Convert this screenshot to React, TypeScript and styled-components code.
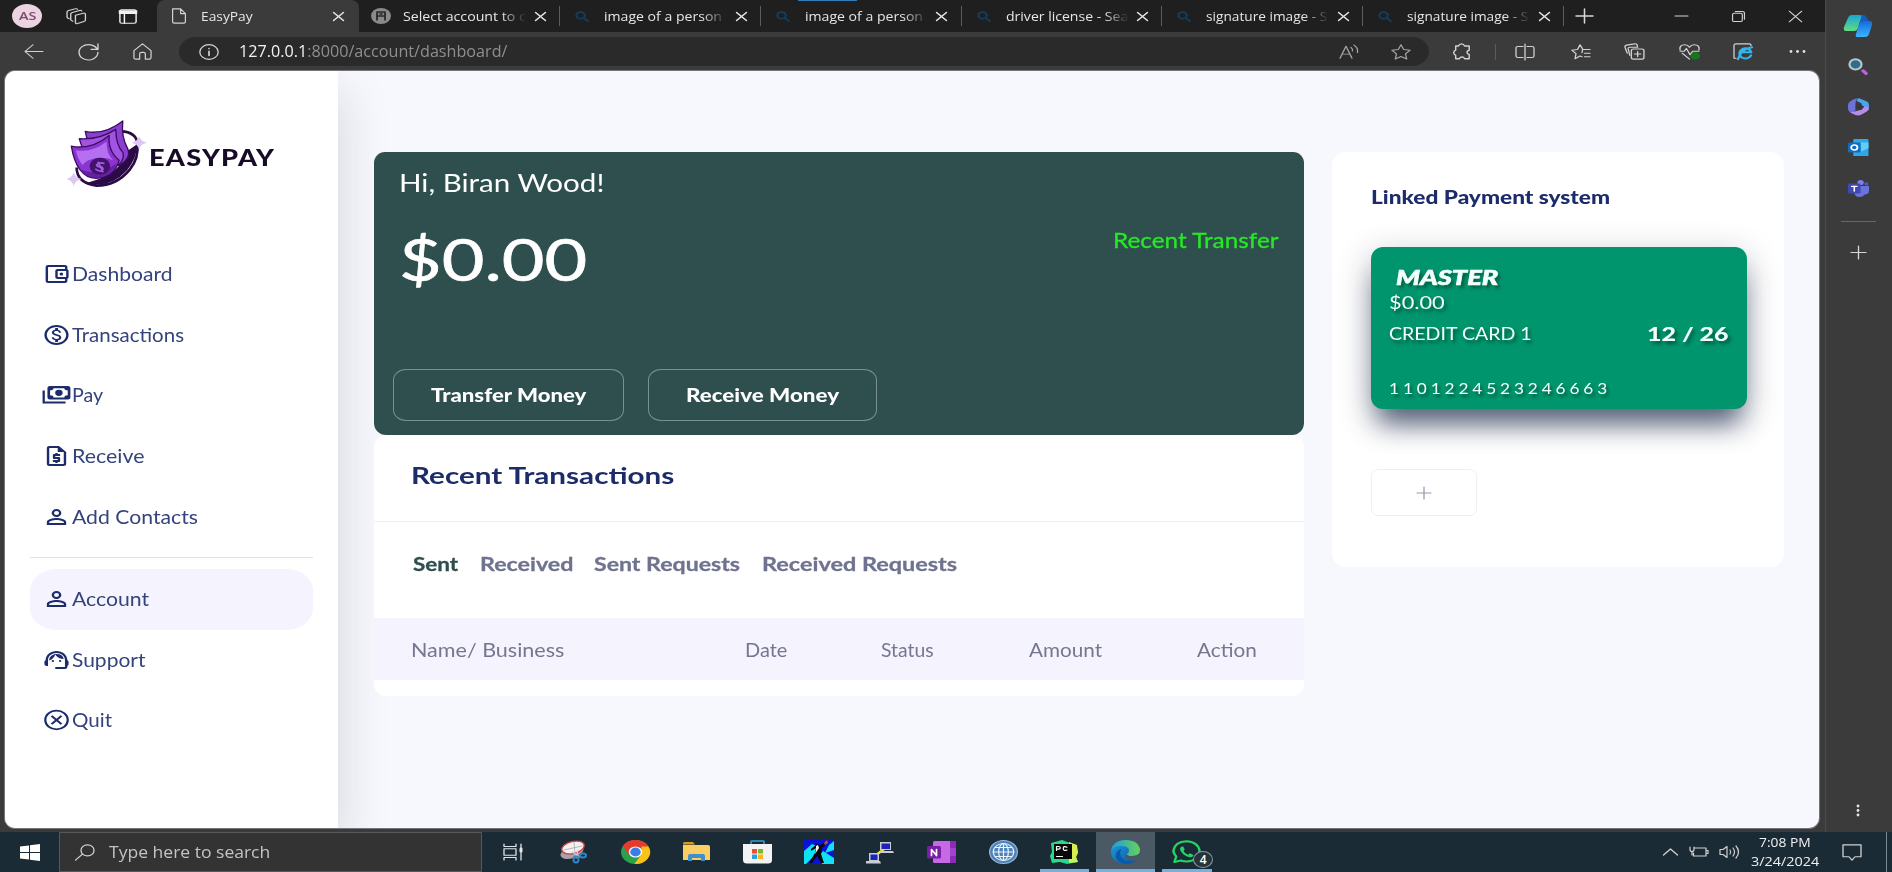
import React, { useLayoutEffect, useRef, useState } from "react";
import styled, { createGlobalStyle } from "styled-components";
import {
  MdOutlineAccountBalanceWallet,
  MdOutlineMonetizationOn,
  MdOutlineRequestQuote,
  MdPersonOutline,
  MdOutlineSupportAgent,
} from "react-icons/md";

const brand = `Lato, "Liberation Sans", sans-serif`;
const system = `"Open Sans", "Noto Sans", sans-serif`;
const navy = "#1c2c6b";

const GlobalStyle = createGlobalStyle`
  *, *::before, *::after { box-sizing: border-box; }
  body { margin: 0; background: #3b3b3b; overflow: hidden; }
`;

/* ---------- text that fills a given width ---------- */

const FitOuter = styled.span<{ $w: number }>`
  display: block;
  flex: none;
  width: ${(p) => p.$w}px;
  white-space: nowrap;
  text-align: left;
`;
const FitInner = styled.span`
  display: inline-block;
  transform-origin: 0 50%;
`;
function Fit({ w, children }: { w: number; children: React.ReactNode }) {
  const ref = useRef<HTMLSpanElement>(null);
  const [scale, setScale] = useState(1);
  useLayoutEffect(() => {
    if (ref.current && ref.current.offsetWidth) setScale(w / ref.current.offsetWidth);
  }, [w]);
  return (
    <FitOuter $w={w}>
      <FitInner ref={ref} style={{ transform: `scaleX(${scale})` }}>{children}</FitInner>
    </FitOuter>
  );
}

/* ---------- icon helpers ---------- */

const Glyph = styled.svg<{ $w: number; $h: number }>`
  display: block;
  flex: none;
  width: ${(p) => p.$w}px;
  height: ${(p) => p.$h}px;
  overflow: visible;
`;
type IconProps = { w?: number; h?: number; box?: string; color?: string; sw?: number; children: React.ReactNode };
const Icon = ({ w = 22, h = 18, box = "0 0 20 20", color = "#d2d2d2", sw = 1.3, children }: IconProps) => (
  <Glyph $w={w} $h={h} viewBox={box} preserveAspectRatio="none" fill="none" stroke={color} strokeWidth={sw} strokeLinecap="round" strokeLinejoin="round">
    {children}
  </Glyph>
);

/* ---------- window frame ---------- */

const Screen = styled.div`
  width: 1892px;
  height: 872px;
  display: grid;
  grid-template: 832px 40px / 1826px 66px;
  background: #3b3b3b;
  overflow: hidden;
  font-family: ${system};
`;
const Browser = styled.div`
  display: flex;
  flex-direction: column;
  border-right: 1px solid #4a4a4a;
`;
const TabStrip = styled.div`
  flex: none;
  height: 32px;
  display: flex;
  background: #1f1f1f;
  font-size: 13px;
  line-height: 32px;
  color: #e6e6e6;
`;
const Slot = styled.div<{ $w: number }>`
  flex: none;
  width: ${(p) => p.$w}px;
  display: flex;
  align-items: center;
  justify-content: center;
`;
const Avatar = styled.div`
  width: 30px;
  height: 24px;
  border-radius: 50%;
  background: #ecd3e2;
  color: #7d4a6c;
  font-size: 11px;
  font-weight: 600;
  line-height: 24px;
  display: flex;
  justify-content: center;
`;
const TabBox = styled.div<{ $w: number; $active?: boolean; $loading?: boolean }>`
  position: relative;
  flex: none;
  width: ${(p) => p.$w}px;
  display: flex;
  align-items: center;
  background: ${(p) => (p.$active ? "#3b3b3b" : "transparent")};
  border-radius: 8px 8px 0 0;
  &::before {
    content: "";
    position: absolute;
    top: 0;
    left: 37px;
    width: 59px;
    height: 1px;
    background: ${(p) => (p.$loading ? "#2f7cb8" : "transparent")};
  }
`;
const TabIcon = styled.div`
  width: 44px;
  display: flex;
  justify-content: center;
  flex: none;
`;
const TabTitle = styled.div<{ $fade?: boolean }>`
  width: 124px;
  overflow: hidden;
  ${(p) => p.$fade && "-webkit-mask-image: linear-gradient(90deg, #000 98px, transparent 123px);"}
`;
const TabClose = styled.div`
  width: 26px;
  display: flex;
  justify-content: center;
  flex: none;
`;
const Divider = styled.div<{ $h: number }>`
  flex: none;
  align-self: center;
  width: 1px;
  height: ${(p) => p.$h}px;
  background: #5c5c5c;
`;
const Toolbar = styled.div`
  flex: none;
  height: 39px;
  display: flex;
  align-items: center;
  padding-left: 7px;
`;
const AddressBar = styled.div`
  width: 1250px;
  height: 29px;
  margin-left: 9px;
  border-radius: 18px / 15px;
  background: #2a2a2a;
  display: flex;
  align-items: center;
  font-size: 15.5px;
  line-height: 29px;
  color: #8f8f8f;
`;
const Host = styled.span`
  color: #f2f2f2;
`;
const Url = styled.div`
  flex: 1;
`;

/* ---------- page ---------- */

const Page = styled.div`
  width: 1814px;
  height: 757px;
  margin-left: 5px;
  border-radius: 10px;
  display: flex;
  overflow: hidden;
  background: #f7f8fd;
  box-shadow: 0 0 0 1px #77757c;
  font-family: ${brand};
`;
const Sidebar = styled.aside`
  flex: none;
  width: 333px;
  background: #fff;
  box-shadow: 6px 20px 45px rgba(20, 25, 50, 0.13);
  padding: 48px 25px 0;
`;
const Brand = styled.div`
  display: flex;
  align-items: center;
  height: 69px;
  padding-left: 36px;
  font-size: 22px;
  font-weight: 900;
  line-height: 40px;
  letter-spacing: 1px;
  color: #170b28;
`;
const BrandName = styled.div`
  padding-top: 8px;
`;
const Nav = styled.nav<{ $top: number }>`
  padding-top: ${(p) => p.$top}px;
`;
const NavItem = styled.a<{ $active?: boolean }>`
  display: flex;
  align-items: center;
  height: 60.6px;
  padding-left: 12px;
  border-radius: 26px / 22px;
  background: ${(p) => (p.$active ? "#f5f3fe" : "transparent")};
  color: #34437d;
  font-size: 19px;
  line-height: 28px;
`;
const NavIcon = styled.span`
  width: 29.5px;
  height: 24px;
  flex: none;
  color: ${navy};
  svg {
    display: block;
    width: 29px;
    height: 24px;
  }
`;
const Rule = styled.hr`
  margin: 10px 0 0;
  border: 0;
  height: 1px;
  background: #e1e1e6;
`;
const Main = styled.main`
  position: relative;
  display: flex;
  align-items: flex-start;
  gap: 28px;
  padding: 81px 0 0 36px;
`;
const Column = styled.div`
  width: 930px;
`;
const Balance = styled.section`
  height: 283px;
  border-radius: 11px 11px 12px 12px;
  background: #2f4f4f;
  color: #fff;
  padding: 14px 25px 14px 19px;
  display: flex;
  flex-direction: column;
`;
const Greeting = styled.div`
  padding-left: 5.5px;
  font-size: 24.5px;
  line-height: 34px;
`;
const BalanceRow = styled.div`
  display: flex;
  justify-content: space-between;
  align-items: flex-start;
  padding: 24px 0 0 6px;
`;
const Total = styled.div`
  font-size: 58px;
  line-height: 70px;
  -webkit-text-stroke: 0.6px #fff;
`;
const TransferLink = styled.a`
  font-size: 22px;
  line-height: 32px;
  color: #27e827;
  -webkit-text-stroke: 0.3px #27e827;
`;
const Actions = styled.div`
  display: flex;
  gap: 24px;
  margin-top: auto;
`;
const ActionButton = styled.button<{ $w: number }>`
  width: ${(p) => p.$w}px;
  height: 52px;
  padding: 0;
  border: 1px solid #78908f;
  border-radius: 13px / 11px;
  background: transparent;
  display: flex;
  align-items: center;
  justify-content: center;
  color: #fff;
  font: 900 19px/30px ${brand};
`;
const Transactions = styled.section`
  height: 261px;
  border-radius: 12px;
  overflow: hidden;
  background: #fff;
`;
const CardTitle = styled.h2`
  margin: 0;
  height: 87px;
  padding: 24px 37px 0;
  border-bottom: 1px solid #f0f0f4;
  font-size: 23px;
  font-weight: 700;
  line-height: 32px;
  color: ${navy};
`;
const Filters = styled.div`
  height: 96px;
  display: flex;
  gap: 21.5px;
  padding: 26.5px 39px 0;
  font-size: 19px;
  font-weight: 700;
  line-height: 30px;
`;
const Filter = styled.span<{ $active?: boolean }>`
  color: ${(p) => (p.$active ? "#2f4f4f" : "#6f7390")};
  -webkit-text-stroke: 0.3px currentColor;
`;
const TableHead = styled.div`
  display: grid;
  grid-template-columns: 334px 135.5px 148px 168px 1fr;
  align-items: center;
  height: 62px;
  padding: 1px 0 0 37px;
  background: #f5f3fe;
  font-size: 19px;
  line-height: 30px;
  color: #74778f;
`;
const Linked = styled.section`
  width: 452px;
  height: 415px;
  padding: 31px 37px 0 38.5px;
  border-radius: 14px;
  background: #fff;
`;
const LinkedTitle = styled.h3`
  margin: 0 0 36px;
  font-size: 18px;
  font-weight: 900;
  line-height: 28px;
  color: ${navy};
`;
const CreditCard = styled.div`
  height: 162px;
  border-radius: 12px;
  padding: 18px 19px 0 18px;
  background: #00956d;
  color: #f3fffb;
  text-shadow: 2px 3px 3px rgba(0, 40, 30, 0.55);
  box-shadow: 0 22px 26px -8px rgba(18, 34, 66, 0.62), 0 10px 34px rgba(20, 30, 60, 0.3);
`;
const Network = styled.div`
  padding-left: 7px;
  font-size: 20px;
  font-weight: 900;
  font-style: italic;
  line-height: 24px;
  -webkit-text-stroke: 0.6px currentColor;
`;
const CardLine = styled.div<{ $gap: number }>`
  display: flex;
  justify-content: space-between;
  margin-top: ${(p) => p.$gap}px;
  font-size: 17.5px;
  line-height: 24px;
`;
const Expiry = styled.b`
  font-size: 18.5px;
  font-weight: 900;
`;
const CardNumber = styled.div`
  margin-top: 30px;
  font-size: 16px;
  line-height: 24px;
  letter-spacing: 3.6px;
`;
const AddCard = styled.button`
  width: 106px;
  height: 47px;
  margin-top: 60px;
  padding: 0;
  border: 1px solid #efeff3;
  border-radius: 7px;
  background: #fff;
  display: flex;
  align-items: center;
  justify-content: center;
`;

/* ---------- right rail and taskbar ---------- */

const Rail = styled.div`
  display: flex;
  flex-direction: column;
  align-items: center;
  padding: 6px 2px 0 0;
  background: #3b3b3b;
`;
const RailSlot = styled.div`
  height: 40.5px;
  display: flex;
  align-items: center;
`;
const RailLine = styled.div`
  width: 35px;
  height: 1px;
  margin: 12px 0 11px;
  background: #676767;
`;
const RailMore = styled.div`
  margin: auto 0 15px;
`;
const Taskbar = styled.div`
  grid-column: 1 / 3;
  display: flex;
  background: #1b2b36;
  color: #eef1f3;
`;
const SearchBox = styled.div`
  flex: none;
  width: 423px;
  border: 1px solid #56595b;
  background: #333;
  display: flex;
  align-items: center;
  font-size: 16px;
  line-height: 38px;
  color: #c4c4c4;
`;
const TaskSlot = styled.div<{ $open?: boolean; $focus?: boolean }>`
  flex: none;
  position: relative;
  width: 61.3px;
  display: flex;
  align-items: center;
  justify-content: center;
  &::before {
    content: "";
    position: absolute;
    inset: 0 1px;
    background: ${(p) => (p.$focus ? "#4a5963" : "transparent")};
  }
  &::after {
    content: "";
    position: absolute;
    bottom: 0;
    left: ${(p) => (p.$focus ? 1 : 6)}px;
    right: ${(p) => (p.$focus ? 1 : 6)}px;
    height: 3px;
    background: ${(p) => (p.$open ? "#76b0dc" : "transparent")};
  }
  svg {
    position: relative;
  }
`;
const Count = styled.span`
  position: absolute;
  left: 37px;
  top: 19px;
  width: 20px;
  height: 17px;
  border: 1px solid #8d979d;
  border-radius: 50%;
  background: #27333b;
  color: #fff;
  font-size: 12px;
  font-weight: 600;
  line-height: 15px;
  text-align: center;
`;
const Tray = styled.div`
  margin-left: auto;
  display: flex;
`;
const Clock = styled.div`
  width: 78px;
  padding-top: 1px;
  display: flex;
  flex-direction: column;
  align-items: center;
  font-size: 12.5px;
  line-height: 19px;
`;
const ShowDesktop = styled.div`
  width: 6px;
  border-left: 1px solid #7b868d;
`;

const Cross = () => (
  <Icon w={11} h={9} box="0 0 10 10" sw={1.4} color="#e2e2e2"><path d="M.5.5l9 9M9.5.5l-9 9" /></Icon>
);
const Plus = ({ w, h, color }: { w: number; h: number; color: string }) => (
  <Icon w={w} h={h} box="0 0 10 10" sw={0.9} color={color}><path d="M5 0v10M0 5h10" /></Icon>
);
const Lens = () => (
  <Icon w={14} h={11} box="0 0 12 12" sw={1.8} color="#153e5c"><circle cx="4.8" cy="4.8" r="3.6" /><path d="M7.6 7.6L11 11" /></Icon>
);

const tabs = [
  { title: "image of a person", w: 118 },
  { title: "image of a person", w: 118, loading: true },
  { title: "driver license - Sea", w: 122 },
  { title: "signature image - S", w: 121 },
  { title: "signature image - S", w: 121 },
];

function Tabs() {
  return (
    <TabStrip>
      <Slot $w={54}><Avatar><Fit w={17}>AS</Fit></Avatar></Slot>
      <Slot $w={45}>
        <Icon w={21} h={16}><path d="M9 8.500l7.500-2.500q2-.5 2 1.500v7q0 1.500-1.500 2L11 19q-2 .5-2-1.500zM6.500 16L5 15q-.5-.5-.5-1.500V7q0-1.500 1.500-2l7-2.500q1.500-.5 2 .8M3 13l-1.500-1Q1 11.500 1 10.500V4.500Q1 3 2.500 2.500L9 .5q1.500-.5 2 .5" transform="translate(0 .5)" /></Icon>
      </Slot>
      <Slot $w={58}>
        <Icon w={18} h={15} color="#f2f2f2" sw={1.6}><rect x="1" y="1" width="18" height="18" rx="2" /><path d="M1 3h18M1 5.2h18" strokeWidth="3" /><path d="M6 6v13" /></Icon>
      </Slot>
      <TabBox $w={202} $active>
        <TabIcon><Icon w={16} h={16} sw={1.5}><path d="M2 1h10l6 6v10q0 2-2 2H4q-2 0-2-2zM12 1v6h6" /></Icon></TabIcon>
        <TabTitle><Fit w={52}>EasyPay</Fit></TabTitle>
        <TabClose><Cross /></TabClose>
      </TabBox>
      <TabBox $w={200}>
        <TabIcon>
          <Icon w={20} h={16} color="#2a2a2a" sw={1.8}><circle cx="10" cy="10" r="10" fill="#8a8a8a" stroke="none" /><path d="M6 15V5h8v10M6 10h8M9 7.5h2" /></Icon>
        </TabIcon>
        <TabTitle $fade><Fit w={123}>Select account to c</Fit></TabTitle>
        <TabClose><Cross /></TabClose>
      </TabBox>
      {tabs.map((t, i) => (
        <React.Fragment key={i}>
          <Divider $h={20} />
          <TabBox $w={199.8} $loading={t.loading}>
            <TabIcon><Lens /></TabIcon>
            <TabTitle $fade><Fit w={t.w}>{t.title}</Fit></TabTitle>
            <TabClose><Cross /></TabClose>
          </TabBox>
        </React.Fragment>
      ))}
      <Divider $h={20} />
      <Slot $w={42}><Plus w={17} h={14} color="#d8d8d8" /></Slot>
      <Slot $w={49} />
      <Slot $w={54}><Icon w={13} h={2} box="0 0 12 2" sw={1}><path d="M0 1h12" /></Icon></Slot>
      <Slot $w={60}><Icon w={13} h={11} box="0 0 12 12" sw={1.1}><rect x=".5" y="2.5" width="9" height="9" rx="1.5" /><path d="M3 .6h6.500q2 0 2 2V9" /></Icon></Slot>
      <Slot $w={54}><Icon w={13} h={11} box="0 0 10 10" sw={0.9}><path d="M.2.2l9.600 9.600M9.800.2L.2 9.800" /></Icon></Slot>
    </TabStrip>
  );
}

function AddressRow() {
  return (
    <Toolbar>
      <Slot $w={54}><Icon w={20} h={15}><path d="M19 10H1M9 1l-8 9 8 9" /></Icon></Slot>
      <Slot $w={54}><Icon w={21} h={17}><path d="M18.500 8A9 9 0 1 0 19 11M19 1v6.500h-6.500" /></Icon></Slot>
      <Slot $w={55}><Icon w={19} h={17}><path d="M1 9l9-8 9 8v8q0 2-2 2h-4v-6q0-2-2-2H9q-2 0-2 2v6H3q-2 0-2-2z" /></Icon></Slot>
      <AddressBar>
        <Slot $w={60}><Icon w={20} h={16}><circle cx="10" cy="10" r="9.200" /><path d="M10 9v5.500M10 5.500v.3" strokeWidth="1.700" /></Icon></Slot>
        <Url><Fit w={269}><Host>127.0.0.1</Host>:8000/account/dashboard/</Fit></Url>
        <Slot $w={49}><Icon w={20} h={15} color="#a5a5a5"><path d="M1 19L7 3l6 16M3.200 13.500h7.600M12 4.500q2 2 1.500 5M15 1.500q4.500 4 3.500 10" /></Icon></Slot>
        <Slot $w={56}><Icon w={20} h={16} color="#a5a5a5"><path d="M10 1l2.800 6 6.400.8-4.700 4.400 1.200 6.600L10 15.600l-5.700 3.200 1.200-6.600L.8 7.800 7.200 7z" /></Icon></Slot>
      </AddressBar>
      <Slot $w={66}><Icon w={18} h={17} sw={1.6}><path d="M6 3.500Q7 1 9.500 1T13 3.500h5v5q-2.500.5-2.500 2.500t2.500 2.500v5h-5Q12 16.500 10 16.500T7 18.500H3v-4Q.8 13.500.8 11.500T3 8.500v-5z" /></Icon></Slot>
      <Divider $h={16} />
      <Slot $w={58}><Icon w={20} h={16}><path d="M8 3H3Q1 3 1 5v10q0 2 2 2h5M12 3h5q2 0 2 2v10q0 2-2 2h-5M10 0v20" /></Icon></Slot>
      <Slot $w={53}><Icon w={20} h={16}><path d="M12 7h7M13.500 11.500H19M13.500 16H19M11 16l-2-1-5 3.500 1-6.500L.8 7.800l5.700-.9L9 1l2.500 5M11.500 7l-.5 4" /></Icon></Slot>
      <Slot $w={55}><Icon w={21} h={17}><path d="M3 12L1 5q-.5-2 1.500-2.500L10 1q2-.5 2.500 1.500l.3 1.500M5.500 14.500L4 7q-.3-2 2-2h7" /><rect x="7" y="7" width="12" height="12" rx="2" /><path d="M13 10v6M10 13h6" /></Icon></Slot>
      <Slot $w={54}>
        <Icon w={21} h={16}><path d="M1 7.500Q0 1 5.500 1 8.500 1 10 4 11.500 1 14.500 1 20 1 19 7.500M3 11.500l7 7.500M1 9h4l2-3.500 3.500 8L13 9h6" /><circle cx="15.500" cy="15" r="4.600" fill="#137a1c" stroke="none" /></Icon>
      </Slot>
      <Slot $w={54}>
        <Icon w={20} h={17}><path d="M3 18H1V3q0-2 2-2h13q2 0 2 2" /><path d="M18 14.500A6 6 0 1 1 18.300 11H8M5 19q3-12 14-14" stroke="#35b5ee" strokeWidth="2.400" /></Icon>
      </Slot>
      <Slot $w={54}><Icon w={17} h={3} box="0 0 17 3" color="none"><g fill="#e0e0e0"><circle cx="2" cy="1.500" r="1.400" /><circle cx="8.500" cy="1.500" r="1.400" /><circle cx="15" cy="1.500" r="1.400" /></g></Icon></Slot>
    </Toolbar>
  );
}

const Logo = () => (
  <Glyph $w={83} $h={69} viewBox="200 145 250 206" preserveAspectRatio="none">
    <path d="M232 290Q232 336 292 344Q352 344 392 296Q420 262 415 216Q410 184 366 182" fill="none" stroke="#2a0b45" strokeWidth="8" />
    <path d="M262 336Q330 356 384 298Q414 262 415 220L386 240Q366 310 262 336z" fill="#2a0b45" />
    <path d="M420 196q4 16 24 20q-20 4-24 20q-4-16-22-20q18-4 22-20zM223 304q4 16 24 20q-20 4-24 22q-4-18-22-22q18-4 22-20z" fill="#dcc8f3" />
    <g stroke="#3a0d63" strokeWidth="4" strokeLinejoin="round">
      <path d="M258 182Q316 194 371 151Q366 200 386 234Q398 262 360 284L276 260z" fill="#8b3fd0" />
      <path d="M240 204Q300 208 350 176Q350 222 372 246Q378 272 346 290L262 270z" fill="#a353e2" />
      <path d="M216 226Q276 238 330 194Q326 242 360 268Q346 320 290 322Q232 320 216 226z" fill="#8a35cf" />
    </g>
    <path d="M230 238Q280 246 322 212Q322 250 342 268Q320 258 290 262Q262 266 250 282Q234 264 230 238z" fill="#b66ff0" />
    <path d="M238 292Q292 322 352 278Q336 318 290 320Q258 320 238 292z" fill="#6420a0" />
    <ellipse cx="302" cy="286" rx="31" ry="25" fill="#43126e" />
    <path d="M316 278Q298 272 292 282Q294 288 306 288Q316 292 308 300Q298 302 288 294M296 272l16 32" fill="none" stroke="#a35ee0" strokeWidth="5" />
  </Glyph>
);

const PayIcon = () => (
  <svg viewBox="0 0 24 24" preserveAspectRatio="none" fill="none" stroke="currentColor">
    <path d="M1.400 7.500V19.500H19.500" strokeWidth="1.900" />
    <path fillRule="evenodd" fill="currentColor" stroke="none" d="M6.500 3h15q2 0 2 2v9.500q0 2-2 2h-15q-2 0-2-2V5q0-2 2-2zM9.500 5.200q0 2.100-2.800 2.100v5q2.800 0 2.800 2.100h9q0-2.100 2.800-2.100v-5q-2.800 0-2.800-2.100z" />
    <circle cx="14" cy="9.800" r="3.100" fill="currentColor" stroke="none" />
  </svg>
);
const QuitIcon = () => (
  <svg viewBox="0 0 24 24" preserveAspectRatio="none" fill="none" stroke="currentColor">
    <circle cx="12" cy="12" r="9.300" strokeWidth="1.800" />
    <path d="M7.900 7.900l8.200 8.200M16.100 7.900l-8.200 8.200" strokeWidth="1.900" />
  </svg>
);

const stretch = { preserveAspectRatio: "none" };
const primary = [
  { label: "Dashboard", w: 101, icon: <MdOutlineAccountBalanceWallet {...stretch} /> },
  { label: "Transactions", w: 112, icon: <MdOutlineMonetizationOn {...stretch} /> },
  { label: "Pay", w: 31, icon: <PayIcon /> },
  { label: "Receive", w: 72, icon: <MdOutlineRequestQuote {...stretch} /> },
  { label: "Add Contacts", w: 126, icon: <MdPersonOutline {...stretch} /> },
];
const secondary = [
  { label: "Account", w: 77, icon: <MdPersonOutline {...stretch} />, active: true },
  { label: "Support", w: 74, icon: <MdOutlineSupportAgent {...stretch} /> },
  { label: "Quit", w: 40, icon: <QuitIcon /> },
];

function SideNav() {
  return (
    <Sidebar>
      <Brand><Logo /><BrandName><Fit w={126}>EASYPAY</Fit></BrandName></Brand>
      <Nav $top={56}>
        {primary.map((n) => <NavItem key={n.label}><NavIcon>{n.icon}</NavIcon><Fit w={n.w}>{n.label}</Fit></NavItem>)}
      </Nav>
      <Rule />
      <Nav $top={11}>
        {secondary.map((n) => <NavItem key={n.label} $active={n.active}><NavIcon>{n.icon}</NavIcon><Fit w={n.w}>{n.label}</Fit></NavItem>)}
      </Nav>
    </Sidebar>
  );
}

function Dashboard() {
  return (
    <Main>
      <Column>
        <Balance>
          <Greeting><Fit w={205}>Hi, Biran Wood!</Fit></Greeting>
          <BalanceRow>
            <Total><Fit w={188}>$0.00</Fit></Total>
            <TransferLink><Fit w={166}>Recent Transfer</Fit></TransferLink>
          </BalanceRow>
          <Actions>
            <ActionButton $w={231}><Fit w={155}>Transfer Money</Fit></ActionButton>
            <ActionButton $w={229}><Fit w={153}>Receive Money</Fit></ActionButton>
          </Actions>
        </Balance>
        <Transactions>
          <CardTitle><Fit w={263}>Recent Transactions</Fit></CardTitle>
          <Filters>
            <Filter $active><Fit w={45}>Sent</Fit></Filter>
            <Filter><Fit w={93}>Received</Fit></Filter>
            <Filter><Fit w={146}>Sent Requests</Fit></Filter>
            <Filter><Fit w={195}>Received Requests</Fit></Filter>
          </Filters>
          <TableHead>
            <Fit w={153}>Name/ Business</Fit>
            <Fit w={42}>Date</Fit>
            <Fit w={53}>Status</Fit>
            <Fit w={73}>Amount</Fit>
            <Fit w={60}>Action</Fit>
          </TableHead>
        </Transactions>
      </Column>
      <Linked>
        <LinkedTitle><Fit w={239}>Linked Payment system</Fit></LinkedTitle>
        <CreditCard>
          <Network><Fit w={102}>MASTER</Fit></Network>
          <CardLine $gap={2}><Fit w={56}>$0.00</Fit></CardLine>
          <CardLine $gap={7}>
            <Fit w={143}>CREDIT CARD 1</Fit>
            <Expiry><Fit w={81}>12 / 26</Fit></Expiry>
          </CardLine>
          <CardNumber><Fit w={222}>1101224523246663</Fit></CardNumber>
        </CreditCard>
        <AddCard><Plus w={14} h={12} color="#9a9aaa" /></AddCard>
      </Linked>
    </Main>
  );
}

function RightRail() {
  return (
    <Rail>
      <RailSlot>
        <Icon w={30} h={24} box="0 0 30 24" color="none">
          <defs>
            <linearGradient id="cpA" x1="0" y1="0" x2="0" y2="1"><stop offset="0" stopColor="#19a5d8" /><stop offset="1" stopColor="#63dc7c" /></linearGradient>
            <linearGradient id="cpB" x1="0" y1="0" x2="0" y2="1"><stop offset="0" stopColor="#1669d8" /><stop offset="1" stopColor="#38b6ff" /></linearGradient>
          </defs>
          <path d="M14 1h6q3 0 4 3l2 3h-9z" fill="#145dc0" />
          <path d="M9 1h8q2 0 1 3l-3 10q-1 3-4 3H3q-3 0-2-4L5 4q1-3 4-3z" fill="url(#cpA)" />
          <path d="M20 7h7q3 0 2 4l-3 9q-1 3-4 3h-8q-2 0-1-3l3-10q1-3 4-3z" fill="url(#cpB)" />
        </Icon>
      </RailSlot>
      <RailSlot>
        <Icon w={20} h={17}><circle cx="7.500" cy="7.500" r="6" fill="#2d6e88" stroke="#b7c7cf" strokeWidth="2.200" /><path d="M15 15l3 3" stroke="#c55be8" strokeWidth="3.600" /></Icon>
      </RailSlot>
      <RailSlot>
        <Icon w={21} h={18} color="none">
          <path d="M10 0l8 4q2 1 2 4v4L13 8V6L8 3z" fill="#4aa4ee" /><path d="M9 0Q0 3 0 8v4q0 3 3 5l4-3V7q0-4 2-7z" fill="#6e72d8" /><path d="M20 11q0 3-2 4l-6 4q-2 1-5 0l-5-3 11-3 3-4z" fill="#b58ce6" /><path d="M8 7.500l4-1.500 2 4-5 3z" fill="#34344a" />
        </Icon>
      </RailSlot>
      <RailSlot>
        <Icon w={21} h={17} color="none"><path d="M6 0h12q1.500 0 1.500 1.500V19q0 1-1 1H5V1z" fill="#2fa8ea" /><path d="M12 4h7.500v7L12 15z" fill="#62cdf7" /><rect y="4" width="12" height="12" rx="1.500" fill="#0f6cc0" /><ellipse cx="6" cy="10" rx="3" ry="3" stroke="#fff" strokeWidth="1.700" /></Icon>
      </RailSlot>
      <RailSlot>
        <Icon w={21} h={17} color="none"><circle cx="12" cy="3" r="3" fill="#7b83eb" /><circle cx="17.500" cy="4.500" r="2" fill="#5059c9" /><path d="M7 7h13v6q0 4-4 4-2 3-5 3-5 0-5-6z" fill="#6a72dc" /><rect y="4" width="12" height="12" rx="1.500" fill="#4048b4" /><path d="M3.500 7.500h5M6 7.500V13" stroke="#fff" strokeWidth="1.500" /></Icon>
      </RailSlot>
      <RailLine />
      <RailSlot><Plus w={15} h={13} color="#d6d6d6" /></RailSlot>
      <RailMore><Icon w={4} h={13} box="0 0 4 13" color="none"><g fill="#e6e6e6"><circle cx="2" cy="2" r="1.400" /><circle cx="2" cy="6.500" r="1.400" /><circle cx="2" cy="11" r="1.400" /></g></Icon></RailMore>
    </Rail>
  );
}

function Tasks() {
  return (
    <Taskbar>
      <Slot $w={59}><Icon w={20} h={17} color="none"><path d="M0 3l9-1.300V9.500H0zM10 1.500L20 0v9.500H10zM0 10.500h9v7.800L0 17zM10 10.500h10V20l-10-1.500z" fill="#fff" /></Icon></Slot>
      <SearchBox>
        <Slot $w={49}><Icon w={20} h={17}><circle cx="12.500" cy="7.500" r="6.500" /><path d="M7.500 12L.5 19" /></Icon></Slot>
        <Fit w={161}>Type here to search</Fit>
      </SearchBox>
      <TaskSlot><Icon w={20} h={16} color="#dfe5e8"><path d="M1 0v3h12V0M1 20v-3h12v3M1 6h12v8H1zM18 0v20" /><path d="M18 6v3" strokeWidth="3" /></Icon></TaskSlot>
      <TaskSlot>
        <Icon w={27} h={23} box="0 0 27 23" color="none"><ellipse cx="12" cy="11" rx="12" ry="6" fill="#a9a1a5" transform="rotate(-20 12 11)" /><ellipse cx="13" cy="6.500" rx="11.500" ry="6" fill="#f6f1f1" stroke="#c83f45" transform="rotate(-14 13 6.500)" /><path d="M14 1l1 12M4 9l18-4" stroke="#a8a8ad" strokeWidth=".8" /><path d="M12 11l8 5M18 9l-2 8" stroke="#ccd" strokeWidth="1.300" /><ellipse cx="16" cy="18.500" rx="2.500" ry="3" stroke="#2e86c8" strokeWidth="2" /><ellipse cx="23" cy="14.500" rx="3" ry="2" stroke="#2e86c8" strokeWidth="2" /></Icon>
      </TaskSlot>
      <TaskSlot>
        <Icon w={29} h={24} box="0 0 24 24" color="none"><circle cx="12" cy="12" r="12" fill="#2aa14b" /><path d="M1.600 6A12 12 0 0 1 22.400 6L12 12z" fill="#e33b2e" /><path d="M1.600 6L7 15.500 12 6.500h10.700A12 12 0 0 0 1.600 6z" fill="#e33b2e" /><path d="M22.700 6.500A12 12 0 0 1 11 24l6-9.500V6.500z" fill="#fbc116" /><circle cx="12" cy="12" r="5.600" fill="#fff" /><circle cx="12" cy="12" r="4.400" fill="#3a7de8" /></Icon>
      </TaskSlot>
      <TaskSlot>
        <Icon w={27} h={20} box="0 0 27 20" color="none"><path d="M0 1.500Q0 0 1.500 0H10l2 2.500H0z" fill="#d99a20" /><path d="M0 3h25q2 0 2 2v13H0z" fill="#f9ce62" /><path d="M5 19v-5q0-2 2-2h13q2 0 2 2v5h-4v-3H9v3z" fill="#3d8fd0" /></Icon>
      </TaskSlot>
      <TaskSlot>
        <Icon w={29} h={24} box="0 0 29 24" color="none"><path d="M8 5V1.500Q8 1 9 1h11q1 0 1 .5V5" stroke="#35a3dc" strokeWidth="1.500" /><path d="M0 4h29v16q0 3.500-4 3.500H4q-4 0-4-3.500z" fill="#f3f3f3" /><path d="M9 9h5v4.500H9z" fill="#e8502e" /><path d="M15 9h5v4.500h-5z" fill="#7cb82c" /><path d="M9 14.500h5V19H9z" fill="#2d9fe0" /><path d="M15 14.500h5V19h-5z" fill="#f8b51c" /></Icon>
      </TaskSlot>
      <TaskSlot>
        <Icon w={30} h={24} box="0 0 30 24" color="none"><path d="M0 0h30v24H0z" fill="#0713d8" /><path d="M0 11L8 4l5 2-2 9-9 9H0zM18 24l-2-9 3-4 11 7v6zM25 5l5-4v9l-9 3z" fill="#10e2f4" /><path d="M13 4l3 1 5-3 1 2-4 4-1 6 3 9h-3l-4-7-5 7H5l6-10 1-5-5 3V9z" fill="#08090c" /><path d="M12 6l2-1 1 3-4 6 1-4z" fill="#fff" /><path d="M20 3l3-3 1 3-3 2z" fill="#d2434d" /></Icon>
      </TaskSlot>
      <TaskSlot>
        <Icon w={28} h={23} box="0 0 28 23" color="none"><path d="M9 15l9-7" stroke="#f2e12d" strokeWidth="2.500" /><path d="M14 1h11v8H14zM13 10h14l1 2H14z" fill="#c8cdd4" /><path d="M15.500 2.500H24V8h-8.500z" fill="#1d22bd" /><path d="M3 12h10v8H3zM0 20h14l1 2.500H0z" fill="#c8cdd4" /><path d="M4.500 13.500h7V19h-7z" fill="#1d22bd" /></Icon>
      </TaskSlot>
      <TaskSlot>
        <Icon w={29} h={22} box="0 0 29 22" color="none"><rect x="6" width="23" height="22" rx="1.500" fill="#c56ae4" /><path d="M23 0h6v22h-6z" fill="#8a2cb5" /><path d="M23 7h6v8h-6z" fill="#a541cc" /><rect y="5" width="14" height="12.500" rx="1.500" fill="#7a1fa5" /><path d="M4.500 14.500v-6l5 6v-6" stroke="#fff" strokeWidth="1.700" /></Icon>
      </TaskSlot>
      <TaskSlot>
        <Icon w={29} h={24} box="0 0 24 24" color="#eaf4fc" sw={1}><circle cx="12" cy="12" r="11.500" fill="#4e83b9" stroke="#96b8d7" /><circle cx="12" cy="12" r="8.500" /><ellipse cx="12" cy="12" rx="4" ry="8.500" /><path d="M12 3.500v17M3.500 12h17M5 7.500h14M5 16.500h14" /></Icon>
      </TaskSlot>
      <TaskSlot $open>
        <Icon w={30} h={24} box="0 0 30 24" color="none"><path d="M2 3l11-3 8 3 6 2 2 7-2 5 2 5-11 2-7-2-8 1-2-7 2-4z" fill="#29d98a" /><path d="M20 2l8 3 1 8-2 4 2 5-9 1z" fill="#d7ee4f" /><path d="M5 4h18v15H5z" fill="#080808" /><path d="M7.500 10.500v-4h2q1.800 0 1.800 1.300T9.500 9.200h-2M18 7.200q-3.500-1.700-3.800 1.300.3 3 3.800 1.500M7.500 16.500h6" stroke="#fff" strokeWidth="1.200" /></Icon>
      </TaskSlot>
      <TaskSlot $open $focus>
        <Icon w={29} h={24} box="0 0 24 24" color="none">
          <defs>
            <linearGradient id="edA" x1="0" y1="0" x2="1" y2="0"><stop offset="0" stopColor="#249bd9" /><stop offset="1" stopColor="#63d35a" /></linearGradient>
            <linearGradient id="edB" x1="0" y1="0" x2="1" y2="1"><stop offset="0" stopColor="#1aa3e0" /><stop offset="1" stopColor="#0b4f9c" /></linearGradient>
          </defs>
          <circle cx="12" cy="12" r="12" fill="url(#edB)" />
          <path d="M.2 10Q2 0 12 0q11 0 12 10 0 6-7 6-4 0-4-2 2-1 2-4-1-4-6-4-6 0-8.800 4z" fill="url(#edA)" />
          <path d="M9 9q-3 4 0 9 4 5 11 3-5 4-11 2Q3 20 4 14q1-4 5-5z" fill="#0d58aa" />
          <path d="M13 14q0 2 4 2 4 0 7-2.500Q23 19 20 20.500 14 21 12 17q-.5-2 1-3z" fill="#4a5963" />
        </Icon>
      </TaskSlot>
      <TaskSlot $open>
        <Icon w={29} h={24} box="0 0 24 24" color="#27d265" sw={2}><path d="M2 22l1.500-5.500Q1 13 1.200 10.500 2.500 1.500 12 1.200q10 .8 10.800 10Q22 21 12 21.500q-2.500 0-4.500-1z" /><path d="M8 6.500Q6 8 7 10.500q2 5 7.500 6.800 3 0 3.300-2.300l-3-1.700-1.500 1.500Q10.500 13.500 9.500 11l1-1.400-1-2.900z" fill="#27d265" stroke="none" /></Icon>
        <Count>4</Count>
      </TaskSlot>
      <Tray>
        <Slot $w={30}><Icon w={15} h={8} box="0 0 15 8"><path d="M.5 7L7.500 1l7 6" /></Icon></Slot>
        <Slot $w={28}><Icon w={20} h={12} box="0 0 20 12" sw={1.200}><path d="M5 2h12v8H4.500V7M17 4.500h2v3h-2M1 1v2.500q0 2 2 2t2-2V1M3 5.500V9" /></Icon></Slot>
        <Slot $w={33}><Icon w={21} h={14} box="0 0 21 14" sw={1.200}><path d="M1 4.500h3l4-3v11l-4-3H1zM11 5q1.500 2 0 4M14 3q3 4 0 8M17 1q5 6 0 12" /></Icon></Slot>
        <Clock><Fit w={52}>7:08 PM</Fit><Fit w={68}>3/24/2024</Fit></Clock>
        <Slot $w={56}><Icon w={20} h={17} sw={1.300}><path d="M1 1h18v14h-6l-3 4-3-4H1z" /></Icon></Slot>
        <Slot $w={6} />
        <ShowDesktop />
      </Tray>
    </Taskbar>
  );
}

export default function App() {
  return (
    <>
      <GlobalStyle />
      <Screen>
        <Browser>
          <Tabs />
          <AddressRow />
          <Page>
            <SideNav />
            <Dashboard />
          </Page>
        </Browser>
        <RightRail />
        <Tasks />
      </Screen>
    </>
  );
}
